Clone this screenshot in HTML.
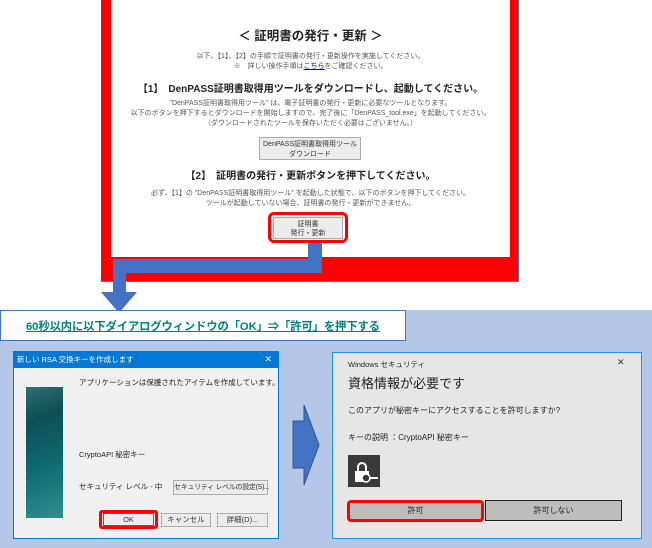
<!DOCTYPE html>
<html><head><meta charset="utf-8"><style>
*{margin:0;padding:0;box-sizing:border-box}
body{width:652px;height:548px;position:relative;background:#fff;font-family:"Liberation Sans","Noto Sans CJK JP",sans-serif;overflow:hidden}
.a{position:absolute;white-space:nowrap}
.c{text-align:center;width:100%}
.btn{background:#ececec;border:1px solid #adadad;font-size:8px;color:#333;text-align:center}
</style></head><body>
<div class="a" style="left:101px;top:0;width:418px;height:282px;background:#f00;border-right:1px solid #4472c4;border-bottom:1px solid #4472c4"></div>
<div class="a" style="left:111px;top:0;width:399px;height:257px;background:#fff"></div>
<div class="a c" style="left:111px;width:399px;top:25px;font-size:12.5px;font-weight:bold;color:#222">＜ 証明書の発行・更新 ＞</div>
<div class="a c" style="left:111px;width:399px;top:52px;font-size:7px;color:#555;line-height:10px">以下、【1】、【2】の手順で証明書の発行・更新操作を実施してください。<br>※　詳しい操作手順は<span style="color:#00f;text-decoration:underline">こちら</span>をご確認ください。</div>
<div class="a c" style="left:111px;width:399px;top:80px;font-size:10px;font-weight:bold;color:#222">【1】　DenPASS証明書取得用ツールをダウンロードし、起動してください。</div>
<div class="a c" style="left:111px;width:399px;top:99px;font-size:7px;color:#555;line-height:10px">"DenPASS証明書取得用ツール" は、電子証明書の発行・更新に必要なツールとなります。<br>以下のボタンを押下するとダウンロードを開始しますので、完了後に「DenPASS_tool.exe」を起動してください。<br>（ダウンロードされたツールを保存いただく必要はございません。）</div>
<div class="a btn" style="left:259px;top:137px;width:102px;height:23px;font-size:7px;line-height:10px;padding-top:2px">DenPASS証明書取得用ツール<br>ダウンロード</div>
<div class="a c" style="left:111px;width:399px;top:167px;font-size:10px;font-weight:bold;color:#222">【2】　証明書の発行・更新ボタンを押下してください。</div>
<div class="a c" style="left:111px;width:399px;top:189px;font-size:7px;color:#555;line-height:10px">必ず、【1】の "DenPASS証明書取得用ツール" を起動した状態で、以下のボタンを押下してください。<br>ツールが起動していない場合、証明書の発行・更新ができません。</div>
<div class="a" style="left:268px;top:212px;width:80px;height:31px;border:3px solid #f00;border-radius:6px;background:#fff"></div>
<div class="a btn" style="left:273px;top:217px;width:70px;height:22px;font-size:7px;line-height:9px;padding-top:2px">証明書<br>発行・更新</div>
<div class="a" style="left:308px;top:243px;width:14px;height:30px;background:#4472c4"></div>
<div class="a" style="left:113px;top:259px;width:209px;height:14px;background:#4472c4"></div>
<div class="a" style="left:113px;top:259px;width:13px;height:34px;background:#4472c4"></div>
<div class="a" style="left:101px;top:292px;width:0;height:0;border-left:18.5px solid transparent;border-right:18.5px solid transparent;border-top:21px solid #4472c4"></div>
<div class="a" style="left:0;top:310px;width:652px;height:238px;background:#b4c7e7"></div>
<div class="a" style="left:0;top:310px;width:406px;height:31px;background:#fff;border:1px solid #4472c4"></div>
<div class="a" style="left:26px;top:318px;font-size:11.3px;color:#008080;text-decoration:underline;font-weight:bold;letter-spacing:-0.1px">60秒以内に以下ダイアログウィンドウの「OK」⇒「許可」を押下する</div>
<div class="a" style="left:13px;top:351px;width:266px;height:188px;background:#f0f0f0;border:1px solid #0078d7"></div>
<div class="a" style="left:13px;top:351px;width:266px;height:17px;background:#0078d7;color:#fff;font-size:7.5px;line-height:17px;padding-left:4px">新しい RSA 交換キーを作成します<span style="position:absolute;right:7px;font-size:9px">✕</span></div>
<div class="a" style="left:26px;top:387px;width:37px;height:131px;background:linear-gradient(160deg,#2f6e72 0%,#0d4f55 25%,#0f6b71 60%,#2e8f92 100%)"></div>
<div class="a" style="left:79px;top:377px;font-size:7.5px;color:#222">アプリケーションは保護されたアイテムを作成しています。</div>
<div class="a" style="left:79px;top:449px;font-size:7.5px;color:#222">CryptoAPI 秘密キー</div>
<div class="a" style="left:79px;top:481px;font-size:7.5px;color:#222">セキュリティ レベル - 中</div>
<div class="a btn" style="left:173px;top:480px;width:95px;height:15px;font-size:7px;line-height:13px;letter-spacing:-0.3px">セキュリティ レベルの設定(S)...</div>
<div class="a" style="left:99px;top:510px;width:59px;height:19px;border:3px solid #f00;border-radius:3px"></div>
<div class="a btn" style="left:103px;top:513px;width:51px;height:13px;line-height:11px;border-color:#0078d7;font-size:7.5px">OK</div>
<div class="a btn" style="left:161px;top:513px;width:50px;height:14px;line-height:12px;font-size:7.5px">キャンセル</div>
<div class="a btn" style="left:217px;top:513px;width:51px;height:14px;line-height:12px;font-size:7.5px">詳細(D)...</div>
<svg class="a" style="left:292px;top:404px" width="28" height="82"><polygon points="1,17 12,17 12,1 27,41 12,81 12,64 1,64" fill="#4472c4" stroke="#2f528f" stroke-width="1"/></svg>
<div class="a" style="left:332px;top:352px;width:310px;height:187px;background:#e6e6e6;border:1px solid #1e90ff"></div>
<div class="a" style="left:348px;top:359px;font-size:7.5px;color:#222">Windows セキュリティ</div>
<div class="a" style="left:617px;top:357px;font-size:9px;color:#333">✕</div>
<div class="a" style="left:348px;top:373px;font-size:13px;color:#222">資格情報が必要です</div>
<div class="a" style="left:348px;top:405px;font-size:8px;color:#222">このアプリが秘密キーにアクセスすることを許可しますか?</div>
<div class="a" style="left:348px;top:432px;font-size:8px;color:#222">キーの説明 ：CryptoAPI 秘密キー</div>
<div class="a" style="left:348px;top:455px;width:32px;height:32px;background:#3a3a3a">
<svg width="32" height="32"><path d="M10 16 v-4 a4 4 0 0 1 8 0 v4" stroke="#fff" stroke-width="2" fill="none"/><rect x="7" y="16" width="14" height="11" fill="#fff"/><circle cx="18" cy="23" r="4" fill="#3a3a3a" stroke="#fff" stroke-width="1.5"/><rect x="22" y="22" width="8" height="2" fill="#fff"/></svg></div>
<div class="a" style="left:347px;top:500px;width:137px;height:22px;border:3px solid #f00;border-radius:4px;background:#bdbdbd;font-size:8px;text-align:center;line-height:16px;color:#222">許可</div>
<div class="a" style="left:485px;top:500px;width:137px;height:21px;border:1px solid #222;background:#bdbdbd;font-size:8px;text-align:center;line-height:19px;color:#222">許可しない</div>
</body></html>
